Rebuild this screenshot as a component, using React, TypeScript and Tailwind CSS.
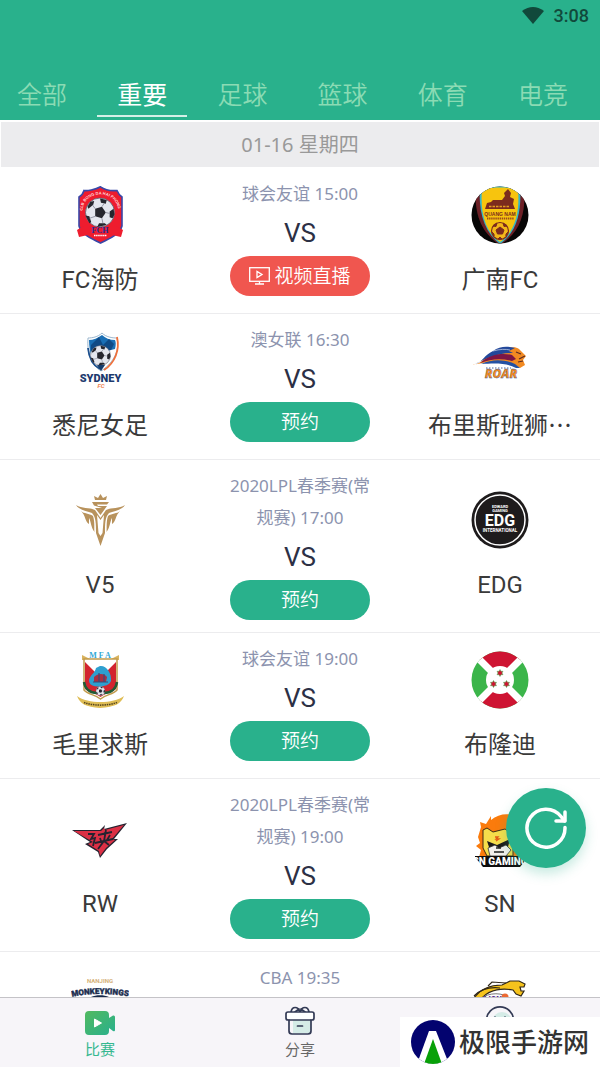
import type { ReactNode } from 'react';

const TABS = ['全部', '重要', '足球', '篮球', '体育', '电竞'];

function Ball({ cx, cy, r }: { cx: number; cy: number; r: number }) {
  return (
    <g transform={`translate(${cx} ${cy}) scale(${r / 15})`}>
      <circle r="15" fill="#e4e6ee" stroke="#55586a" strokeWidth="0.8" />
      <path d="M-5 -4 L2 -6 L6 0 L2 6 L-5 4Z" fill="#26262e" />
      <path d="M-13 -6 L-10 -11 L-6 -12 L-7 -8 L-12 -4Z M0 -14.5 L7 -13 L6 -9 L1 -10Z M14 -4 L10 -1 L10 5 L13 6 L15 2Z M-15 3 L-11 4 L-9 10 L-11 11Z M-3 15 L-1 11 L5 11 L7 13Z" fill="#26262e" />
      <path d="M-5 -4 L-8 -8 M2 -6 L4 -9 M6 0 L10 1 M2 6 L3 11 M-5 4 L-11 6" stroke="#7b7e90" strokeWidth="0.8" />
    </g>
  );
}

function Logo({ children }: { children: ReactNode }) {
  return (
    <svg viewBox="0 0 58 58" className="size-[58px] shrink-0" aria-hidden="true">
      {children}
    </svg>
  );
}

const haiphong = (
  <Logo>
    <path d="M29.5 0.8 C24 4 16 5 13 4.5 C12 8 10 10 8 11 V40 C10 48 21 53 29.5 57 C38 53 49 48 51 40 V11 C48 9 47 7 46 4.5 C40 5 34 4 29.5 0.8Z" fill="#ee1c2e" stroke="#3947a8" strokeWidth="1.6" />
    <path id="fch-arc" d="M11.500 25 C12 3 46 3 47.500 25" fill="none" />
    <text fontSize="4" fontWeight="700" fill="#ffd9dc" fontFamily="Liberation Sans, sans-serif">
      <textPath href="#fch-arc">CLB BONG DA HAI PHONG</textPath>
    </text>
    <Ball cx={29} cy={26.5} r={14.5} />
    <path d="M6 44 L14 39 C23 42 35 42 44 39 L52 44 L50 51 L41 49 H17 L8 51Z" fill="#ee1c2e" />
    <text x="29" y="47" fontSize="8" fontWeight="700" textAnchor="middle" fill="#23319b" fontFamily="Liberation Serif, serif">FCH</text>
    <path d="M23 49.500 H36" stroke="#fff" strokeWidth="1.300" strokeDasharray="1.500 0.600" />
  </Logo>
);

const quangnam = (
  <Logo>
    <clipPath id="qn-clip">
      <circle cx="29" cy="29" r="28.500" />
    </clipPath>
    <g clipPath="url(#qn-clip)">
      <rect width="58" height="58" fill="#070606" />
      <path d="M5 2 H53 C55 26 50 46 29 59 C9 46 3 26 5 2Z" fill="#6d2026" />
      <path d="M9 -2 H49 C51 26 46 46 29 58 C13 46 7 26 9 -2Z" fill="#34b6c9" />
      <path d="M11 3 C22 1 37 1 47 3 C49 26 44 46 29 56 C14 46 9 26 11 3Z" fill="#f7c40e" />
      <path d="M14 23 L16 17 L20 16 L22 14 H31 L34 10 L33 7 L37 3 L40 7 L39 11 L43 13 L42 18 L44 23Z" fill="#7c2b1d" />
      <path d="M18 20.500 H38" stroke="#e39b20" strokeWidth="1.400" strokeDasharray="2.500 1" />
    </g>
    <text x="29" y="29.500" fontSize="5" fontWeight="700" textAnchor="middle" fill="#7c2b1d" fontFamily="Liberation Sans, sans-serif">QUANG NAM</text>
    <path d="M16 32.500 H43" stroke="#9a4a1d" strokeWidth="1.800" strokeDasharray="1.400 0.700" />
    <circle cx="29" cy="45" r="8.500" fill="#f3b81a" stroke="#7c2b1d" strokeWidth="1.200" />
    <path d="M29 41 L33 44 L31.500 48 H26.500 L25 44Z M22 40 L26 37 L25 40.500Z M36 40 L32 37 L33 40.500Z M21 46 L23 48 L23 50Z M37 46 L35 48 L35 50Z M27 53 L29 51 L31 53Z" fill="#7c2b1d" stroke="#7c2b1d" />
  </Logo>
);

const sydney = (
  <Logo>
    <path d="M31 1 C27 5 21 6 17 6 C16 20 19 32 30 39 C41 32 49 20 46 6 C41 6 35 5 31 1Z" fill="#fff" stroke="#9bb7cf" />
    <path d="M31 3 C27 6 22 8 18 8 C18 14 19 19 20 23 L44 17 C45 13 45 10 44 8 C39 8 34 6 31 3Z" fill="#1a6fb5" />
    <path d="M20 13 L28 5 L32 13 L38 7 L43 12 L40 18 L20 20Z" fill="#0f4a86" />
    <path d="M46 5 C49 18 44 31 33 38" fill="none" stroke="#f0703a" strokeWidth="1.800" />
    <path d="M17 16 C18 27 23 34 29 37" fill="none" stroke="#1c4f8d" strokeWidth="1.800" />
    <Ball cx={29.5} cy={23.5} r={10} />
    <path d="M26 33 L30 39 L34 33Z" fill="#153b6b" />
    <text x="29.500" y="49.500" fontSize="11" fontWeight="900" textAnchor="middle" fill="#1d3a6e" fontFamily="Roboto, sans-serif">SYDNEY</text>
    <text x="30" y="56" fontSize="6" fontStyle="italic" fontWeight="700" textAnchor="middle" fill="#f0824e" fontFamily="Roboto, sans-serif">FC</text>
  </Logo>
);

const roar = (
  <Logo>
    <path d="M1 33 C13 32 14 22 27 19 C34 17 43 13 48 17 L55 24 L52 28 L54 33 L49 36 L44 33 C32 29 19 29 1 33Z" fill="#f28a22" />
    <path d="M4 32 C12 30 13 23 22 19 C29 14 36 14 44 16 L38 19 L42 21 C29 21 18 25 4 32Z" fill="#23489a" />
    <path d="M9 31 C20 21 33 21 41 23 L45 27 L41 29 C30 26 20 27 9 31Z" fill="#7d1645" />
    <path d="M10 32 C23 26 35 28 44 32 L49 36 L45 36 C35 31 26 31 10 32Z" fill="#2451a3" />
    <path d="M22 19 C29 17 35 17 39 18" stroke="#eef1fb" strokeWidth="0.600" fill="none" />
    <path d="M45 20 L50 22 M48 27 L54 24 M47 30 L52 29" stroke="#5a2b25" strokeWidth="1.200" />
    <path d="M15 36 H40" stroke="#49629b" strokeWidth="1" strokeDasharray="1.500 1.500" />
    <text x="30" y="46" fontSize="12" fontWeight="900" fontStyle="italic" textAnchor="middle" fill="#f28a22" stroke="#2c4d91" strokeWidth="0.300" fontFamily="Open Sans, sans-serif">ROAR</text>
  </Logo>
);

const v5 = (
  <Logo>
    <g fill="#b8925c">
      <path d="M24 9 L23 5 L27 7 L29.500 3 L32 7 L36 5 L35 9Z" />
      <path d="M21 11 H38 L36 13.500 H26 L27 15 H36 L29.500 24 L24 17 H31 L23 14.500Z" />
      <path d="M5 14 C11 18 18 16 24 19 L29.500 27 L35 19 C41 16 48 18 54 14 C51 19 43 20 38 22 C34 26 34 33 34 42 L29.500 55 L25 42 C25 33 25 26 21 22 C16 20 8 19 5 14Z" />
      <path d="M10 20 C13 23 18 22 22 25 C24 31 23 37 23.500 41 C20 37 20 30 18 27 L18 33 C14 31 15 25 10 20Z M49 20 C46 23 41 22 37 25 C35 31 36 37 35.500 41 C39 37 39 30 41 27 L41 33 C45 31 44 25 49 20Z" />
    </g>
    <path d="M26 24 L29.500 29 L33 24 L31.500 42 L29.500 45 L27.500 42Z" fill="#fff" />
  </Logo>
);

const edg = (
  <Logo>
    <circle cx="29" cy="29" r="28.500" fill="#1e1b1c" />
    <circle cx="29" cy="29" r="25" fill="none" stroke="#fff" strokeWidth="1.500" />
    <g fill="#fff" textAnchor="middle" fontFamily="Roboto, sans-serif" fontWeight="700">
      <text x="29" y="16.500" fontSize="4">EDWARD</text>
      <text x="29" y="21" fontSize="4">GAMING</text>
      <text x="29" y="35" fontSize="16">EDG</text>
      <text x="29" y="41" fontSize="4.500">INTERNATIONAL</text>
    </g>
  </Logo>
);

const mauritius = (
  <Logo>
    <text x="29" y="6.500" fontSize="8" fontWeight="700" textAnchor="middle" fill="#35a9d6" fontFamily="Liberation Serif, serif">M F A</text>
    <path d="M11 4 L19 8 H40 L48 4 V9 H11Z" fill="#d9b35f" />
    <path d="M13 8 H46 V39 C42 44 35 43 29.500 48 C24 43 17 44 13 39Z" fill="#fff" stroke="#c29b4b" strokeWidth="1.500" />
    <path d="M14 11 L27 24 L14 37Z M45 11 L32 24 L45 37Z" fill="#d2242f" />
    <path d="M14 30 H45 V38 C41 42 36 41 29.500 46 C23 41 18 42 14 38Z" fill="#d2242f" />
    <path d="M29 15 C35 14 41 22 40 30 C38 35 34 34 30 36 C25 35 18 36 18 29 C19 24 24 22 25 17Z" fill="#2e9fcf" />
    <path d="M23 26 C27 22 33 22 36 26 L35 31 H23Z" fill="#a92f42" />
    <path d="M22 31 H37 M28 22 V31 M33 23 V31" stroke="#3b4a79" strokeWidth="1.200" />
    <path d="M13 31 C14 38 19 42 26 42 M46 31 C45 38 40 42 33 42" fill="none" stroke="#225b35" strokeWidth="2.500" />
    <Ball cx={29.5} cy={40} r={4.5} />
    <path d="M6 45 C17 53 42 53 53 45 C50 53 44 56 29 57 C15 56 9 53 6 45Z" fill="#dfbd55" />
    <path d="M13 51.500 C23 55 36 55 46 51.500" fill="none" stroke="#55451e" strokeWidth="1.500" strokeDasharray="1.500 0.800" />
  </Logo>
);

const star = 'M0 -3.500 L1 -1.700 L3 -1.700 L2 0 L3 1.700 L1 1.700 L0 3.500 L-1 1.700 L-3 1.700 L-2 0 L-3 -1.700 L-1 -1.700Z';

const burundi = (
  <Logo>
    <clipPath id="bi-clip">
      <circle cx="29" cy="29" r="28.500" />
    </clipPath>
    <g clipPath="url(#bi-clip)">
      <rect width="58" height="58" fill="#3bb54a" />
      <path d="M-4 -4 H62 L29 29Z M-4 62 H62 L29 29Z" fill="#ce1432" />
      <path d="M-4 -4 L62 62 M62 -4 L-4 62" stroke="#fff" strokeWidth="7" />
      <circle cx="29" cy="29" r="14" fill="#fff" />
    </g>
    <g fill="#ce1432" stroke="#3bb54a" strokeWidth="0.500">
      <path d={star} transform="translate(29 22)" />
      <path d={star} transform="translate(22.500 33)" />
      <path d={star} transform="translate(35.500 33)" />
    </g>
  </Logo>
);

const rw = (
  <Logo>
    <path d="M1 20 L29 20 L34 15 L33 19 L56 13 L43 29 L47 29 L36 39 L29 48 L27 42 L14 34 L19 32Z" fill="#252330" />
    <path d="M3 21 L30 21 L33 18 L34 20 L53 15 L41 29 L44 30 L35 38 L29 46 L28 41 L17 34 L22 32Z" fill="#dc3045" />
    <path d="M17 24 L23 24 L20 29 L24 28 L22 36 M27 25 L41 22 M35 20 L33 31 M29 28 L30 31 M39 25 L36 30 M24 33 L42 29 M33 31 L27 39 M33 31 L38 35" stroke="#252330" strokeWidth="1.800" fill="none" />
  </Logo>
);

const sn = (
  <Logo>
    <clipPath id="sn-clip">
      <path d="M4 0 H58 V46 L49 57 H12 L4 47Z" />
    </clipPath>
    <g clipPath="url(#sn-clip)">
      <path d="M7 51 L10 40 L5 36 L9 33 L7 27 L10 17 L9 12 L15 14 L20 6 L20 10 C27 4 37 3 44 6 C54 15 57 31 51 49Z" fill="#fa7b0c" />
      <path d="M12 20 L16 18 L22 22 L34 19 L42 24 L42 46 H16 L12 38Z" fill="#f6dd4b" stroke="#3d2b16" strokeWidth="1" />
      <path d="M16 31 L26 35 L39 29 L37 37 L29 39 L18 37Z" fill="#1c1818" />
      <path d="M17 38 L24 35 L28 38 L35 35 L40 40 L35 46 H19Z" fill="#f3f0ec" stroke="#333" strokeWidth="0.800" />
      <path d="M23 42 H33 M25 38 H30" stroke="#222" strokeWidth="1.400" />
      <path d="M24 27 H27 L25 29 H28 L25 31" fill="none" stroke="#e45a16" strokeWidth="1.300" />
      <rect y="46" width="58" height="11" fill="#0e0d0d" />
    </g>
    <text x="29" y="55" fontSize="10" fontWeight="900" textAnchor="middle" fill="#fff" fontFamily="Roboto, sans-serif">SN GAMING</text>
  </Logo>
);

const nanjing = (
  <Logo>
    <text x="29" y="13" fontSize="6" fontWeight="700" textAnchor="middle" fill="#d5b078" fontFamily="Roboto, sans-serif">NANJING</text>
    <path id="nj-arc" d="M0 27 C16 23 42 23 60 27" fill="none" />
    <text fontSize="8" fontWeight="900" fill="#1b2d4f" stroke="#1b2d4f" strokeWidth="0.400" fontFamily="Roboto, sans-serif">
      <textPath href="#nj-arc" startOffset="1">MONKEYKINGS</textPath>
    </text>
    <path d="M17 29 C22 24 36 24 41 29 V44 L29 55 L17 44Z" fill="#15284a" />
  </Logo>
);

const lions = (
  <Logo>
    <path d="M3 28 C10 18 20 15 31 15 L39 11 L48 11 L54 14 L53 17 L49 17 L50 21 L53 21 L50 26 L45 24 L42 20 C32 18 19 19 11 28Z" fill="#f6c31c" stroke="#302718" strokeWidth="1.200" />
    <path d="M3 26 C11 18 20 17 29 18 M17 16 L21 12 L35 13" stroke="#302718" strokeWidth="1.200" fill="none" />
    <path d="M10 29 C17 22 33 22 39 29" fill="#fff" stroke="#777" />
    <text x="22" y="31" fontSize="8" fontWeight="900" textAnchor="middle" fill="#5a2d91" fontFamily="Roboto, sans-serif">LION</text>
    <circle cx="34" cy="27" r="3.500" fill="#ec6a33" />
    <path d="M8 33 H45 L38 50 H18Z" fill="#5a2d91" />
  </Logo>
);

type Match = {
  meta: string;
  home: string;
  homeLogo: ReactNode;
  away: string;
  awayLogo: ReactNode;
  live?: boolean;
};

const MATCHES: Match[] = [
  { meta: '球会友谊 15:00', home: 'FC海防', homeLogo: haiphong, away: '广南FC', awayLogo: quangnam, live: true },
  { meta: '澳女联 16:30', home: '悉尼女足', homeLogo: sydney, away: '布里斯班狮⋯', awayLogo: roar },
  { meta: '2020LPL春季赛(常规赛) 17:00', home: 'V5', homeLogo: v5, away: 'EDG', awayLogo: edg },
  { meta: '球会友谊 19:00', home: '毛里求斯', homeLogo: mauritius, away: '布隆迪', awayLogo: burundi },
  { meta: '2020LPL春季赛(常规赛) 19:00', home: 'RW', homeLogo: rw, away: 'SN', awayLogo: sn },
  { meta: 'CBA 19:35', home: '南京同曦', homeLogo: nanjing, away: '浙江广厦', awayLogo: lions },
];

function Team({ name, logo }: { name: string; logo: ReactNode }) {
  return (
    <div className="flex flex-col items-center gap-5">
      {logo}
      <span className="whitespace-nowrap font-[Roboto,'Noto_Sans_CJK_SC',sans-serif] text-2xl leading-8 text-[#3a3a3a]">{name}</span>
    </div>
  );
}

function MatchRow({ match }: { match: Match }) {
  return (
    <li className="grid min-h-[146px] grid-cols-3 items-center border-b border-[#ececee]">
      <Team name={match.home} logo={match.homeLogo} />
      <div className="flex flex-col items-center self-start px-6 pt-2.5 pb-3">
        <p className="text-center text-[17px] leading-8 text-[#8c93ae]">{match.meta}</p>
        <span className="font-[Roboto,sans-serif] text-[26px] leading-[46px] text-[#2c3045]">VS</span>
        {match.live ? (
          <button type="button" className="flex h-10 w-[140px] items-center justify-center gap-1 rounded-full bg-[#f0564f] text-[19px] font-[350] text-white">
            <svg viewBox="0 0 21 18" className="h-[18px] w-[21px]" fill="none" stroke="currentColor" strokeWidth="1.3" aria-hidden="true">
              <rect x="0.700" y="0.700" width="19.600" height="13.600" />
              <path d="M8 4.500 V10.500 L13 7.500Z M10.500 14.500 V17 M6 17 H15" />
            </svg>
            视频直播
          </button>
        ) : (
          <button type="button" className="h-10 w-[140px] rounded-full bg-[#29b18c] text-[19px] font-[350] text-white">预约</button>
        )}
      </div>
      <Team name={match.away} logo={match.awayLogo} />
    </li>
  );
}

function CameraIcon() {
  return (
    <svg viewBox="0 0 30 30" className="size-[30px]" aria-hidden="true">
      <defs>
        <linearGradient id="cam" x1="0" x2="1" y1="0" y2="1">
          <stop offset="0" stopColor="#52b960" />
          <stop offset="1" stopColor="#28b08e" />
        </linearGradient>
      </defs>
      <path d="M4 5 H20 Q24 5 24 9 V12 L28 9.500 Q30 9 30 11 V24 Q30 26 28 25 L24 22 V25 Q24 29 20 29 H4 Q0 29 0 25 V9 Q0 5 4 5Z" fill="url(#cam)" />
      <path d="M9.500 13 V21 L16.500 17Z" fill="#fff" stroke="#fff" strokeLinejoin="round" />
    </svg>
  );
}

function GiftIcon() {
  return (
    <svg viewBox="0 0 30 30" className="size-[30px]" fill="none" stroke="#333a55" strokeWidth="1.700" strokeLinecap="round" strokeLinejoin="round" aria-hidden="true">
      <path d="M8 6 H26 V27 H8Z" fill="#d5ece7" stroke="none" />
      <path d="M15 6 C13 0 7 0 6 6 M15 6 C17 0 23 0 24 6 M10 6 L14 3 M20 6 L16 3" />
      <rect x="1" y="6" width="28" height="8" rx="2" fill="#fff" />
      <path d="M4 14 V25 Q4 28 7 28 H23 Q26 28 26 25 V14 M12.500 20 H17.500" />
    </svg>
  );
}

function FaceIcon() {
  return (
    <svg viewBox="0 0 30 30" className="size-[30px]" fill="none" stroke="#333a55" strokeWidth="1.700" strokeLinecap="round" aria-hidden="true">
      <circle cx="17" cy="16" r="10" fill="#d5ece7" stroke="none" />
      <circle cx="15" cy="14.500" r="13.600" />
      <path d="M10 11 V13 M20 11 V13 M9 19 Q15 24 21 19" />
    </svg>
  );
}

export default function App() {
  return (
    <div className="flex h-screen flex-col overflow-hidden bg-white font-['Noto_Sans','Noto_Sans_CJK_SC',sans-serif]">
      <header className="shrink-0 bg-[#29b18c]">
        <div className="flex h-8 items-center justify-end gap-2.5 pr-[11px] text-[#11493b]">
          <svg viewBox="0 0 22 18" className="h-[18px] w-[22px]" aria-hidden="true">
            <path d="M0 4 Q11 -4 22 4 L11 17Z" fill="currentColor" />
          </svg>
          <span className="font-[Roboto,sans-serif] text-lg font-medium leading-8">3:08</span>
        </div>
        <nav className="flex items-end justify-between pt-[38px] pr-8 pl-[17px]">
          {TABS.map((tab) => (
            <a
              key={tab}
              href="#"
              aria-current={tab === '重要' ? 'page' : undefined}
              className="relative h-[50px] text-[25px] leading-12 font-[350] text-[#8bdbb4] aria-[current=page]:font-normal aria-[current=page]:text-white"
            >
              {tab}
              {tab === '重要' && <span className="absolute -inset-x-5 bottom-[3px] h-0.5 bg-[#d4f0e7]" />}
            </a>
          ))}
        </nav>
      </header>

      <main className="min-h-0 flex-1 overflow-y-auto [scrollbar-width:none]">
        <h2 className="mx-px mt-0.5 mb-px bg-[#ececee] text-center text-xl leading-[45px] text-[#999]">01-16 星期四</h2>
        <ul>
          {MATCHES.map((match) => (
            <MatchRow key={match.home} match={match} />
          ))}
        </ul>
      </main>

      <nav className="grid h-[70px] shrink-0 grid-cols-3 border-t border-[#c4c3c7] bg-[#f7f5f9] pt-2 text-[15px] leading-6 text-[#666]">
        <a href="#" className="flex flex-col items-center gap-px text-[#35b890]">
          <CameraIcon />
          比赛
        </a>
        <a href="#" className="flex flex-col items-center gap-px">
          <GiftIcon />
          分享
        </a>
        <a href="#" aria-label="我的" className="flex flex-col items-center">
          <FaceIcon />
        </a>
      </nav>

      <button type="button" aria-label="刷新" className="fixed right-3.5 bottom-[199px] flex size-20 items-center justify-center rounded-full bg-[#29b18c] shadow-[0_6px_12px_rgba(41,177,140,0.25)]">
        <svg viewBox="0 0 42 42" className="size-[42px]" fill="none" stroke="#fff" strokeWidth="3.500" strokeLinecap="round" strokeLinejoin="round" aria-hidden="true">
          <path d="M40 20.500 A19 19 0 1 1 36 9.500 L39.500 14" />
          <path d="M40 5 V14 H31" />
        </svg>
      </button>

      <div className="fixed right-0 bottom-0 flex h-[50px] w-[200px] items-center gap-1 bg-white pl-[11px]">
        <svg viewBox="0 0 44 44" className="size-11 shrink-0" aria-hidden="true">
          <clipPath id="mark-clip">
            <circle cx="22" cy="22" r="22" />
          </clipPath>
          <g clipPath="url(#mark-clip)">
            <rect width="44" height="44" fill="#03036f" />
            <path d="M18 11 H25 L38 44 H6Z" fill="#fff" />
            <path d="M22 19 L31 44 H13Z" fill="#08a008" />
          </g>
        </svg>
        <span className="whitespace-nowrap text-[26px] font-medium text-[#333]">极限手游网</span>
      </div>
    </div>
  );
}
